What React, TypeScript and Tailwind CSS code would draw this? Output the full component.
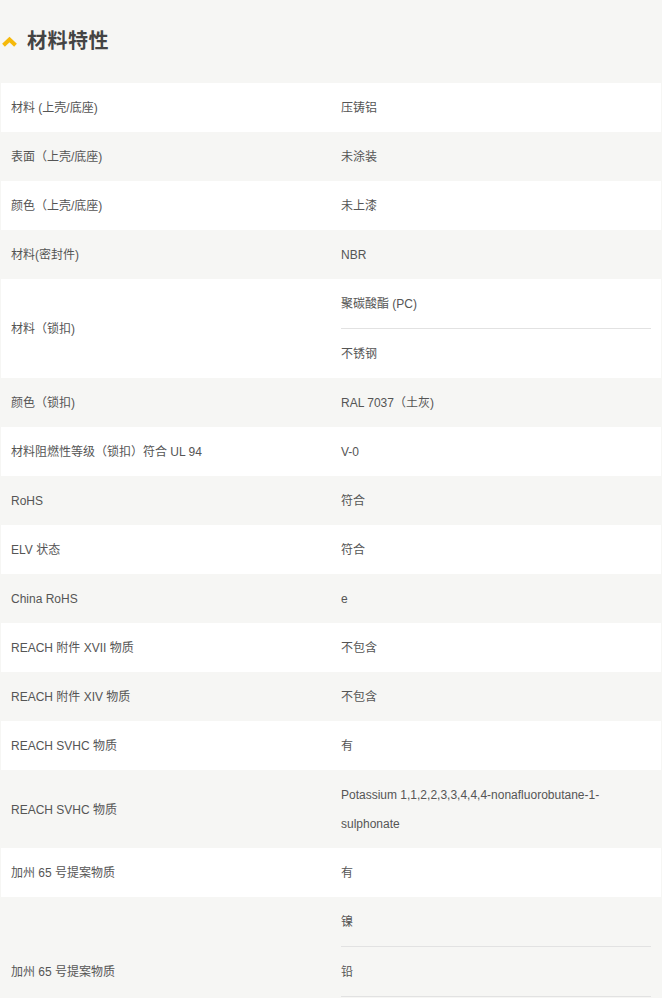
import React from "react";

type Row = { label: string; values: string[]; tail?: boolean };

const ROWS: Row[] = [
  { label: "材料 (上壳/底座)", values: ["压铸铝"] },
  { label: "表面（上壳/底座)", values: ["未涂装"] },
  { label: "颜色（上壳/底座)", values: ["未上漆"] },
  { label: "材料(密封件)", values: ["NBR"] },
  { label: "材料（锁扣)", values: ["聚碳酸酯 (PC)", "不锈钢"] },
  { label: "颜色（锁扣)", values: ["RAL 7037（土灰)"] },
  { label: "材料阻燃性等级（锁扣）符合 UL 94", values: ["V-0"] },
  { label: "RoHS", values: ["符合"] },
  { label: "ELV 状态", values: ["符合"] },
  { label: "China RoHS", values: ["e"] },
  { label: "REACH 附件 XVII 物质", values: ["不包含"] },
  { label: "REACH 附件 XIV 物质", values: ["不包含"] },
  { label: "REACH SVHC 物质", values: ["有"] },
  {
    label: "REACH SVHC 物质",
    values: ["Potassium 1,1,2,2,3,3,4,4,4-nonafluorobutane-1-sulphonate"],
  },
  { label: "加州 65 号提案物质", values: ["有"] },
  // 列表在截图底部被截断：第三项落在画面外，只留出它的高度
  { label: "加州 65 号提案物质", values: ["镍", "铅"], tail: true },
];

export default function App() {
  return (
    <div
      className="h-[998px] overflow-hidden bg-[#f6f6f4] text-[#555]"
      style={{ fontFamily: '"Liberation Sans", "Noto Sans CJK SC", sans-serif' }}
    >
      {/* 标题 */}
      <div className="h-[83px] flex items-center pl-[2px] pt-[1px] pb-[2px]">
        <svg width="15" height="11" viewBox="0 0 15 11" className="mr-[10px] mt-[1px]">
          <path d="M1.5 9.2 L7.5 3.5 L13.5 9.2" fill="none" stroke="#f5b90b" strokeWidth="4" />
        </svg>
        <h2 className="text-[20px] font-bold text-[#444] tracking-[0.5px]">材料特性</h2>
      </div>

      <div className="mx-[1px]">
        {ROWS.map((row, i) => (
          <div
            key={i}
            className={`flex text-[12px] ${i % 2 === 0 ? "bg-white" : "bg-[#f6f6f4]"} ${
              row.tail ? "min-h-[148px]" : ""
            }`}
          >
            <div className="w-[330px] shrink-0 flex items-center px-[10px] leading-[29px] pt-[11px] pb-[9px]">
              {row.label}
            </div>
            <div className="flex-1 px-[10px]">
              {row.values.map((v, j) => {
                const border = j < row.values.length - 1 || row.tail;
                return (
                  <div
                    key={j}
                    className={`leading-[29px] pt-[11px] pb-[9px] ${
                      border ? "border-b border-[#e2e2e2] h-[50px]" : ""
                    }`}
                  >
                    {v}
                  </div>
                );
              })}
            </div>
          </div>
        ))}
      </div>
    </div>
  );
}
